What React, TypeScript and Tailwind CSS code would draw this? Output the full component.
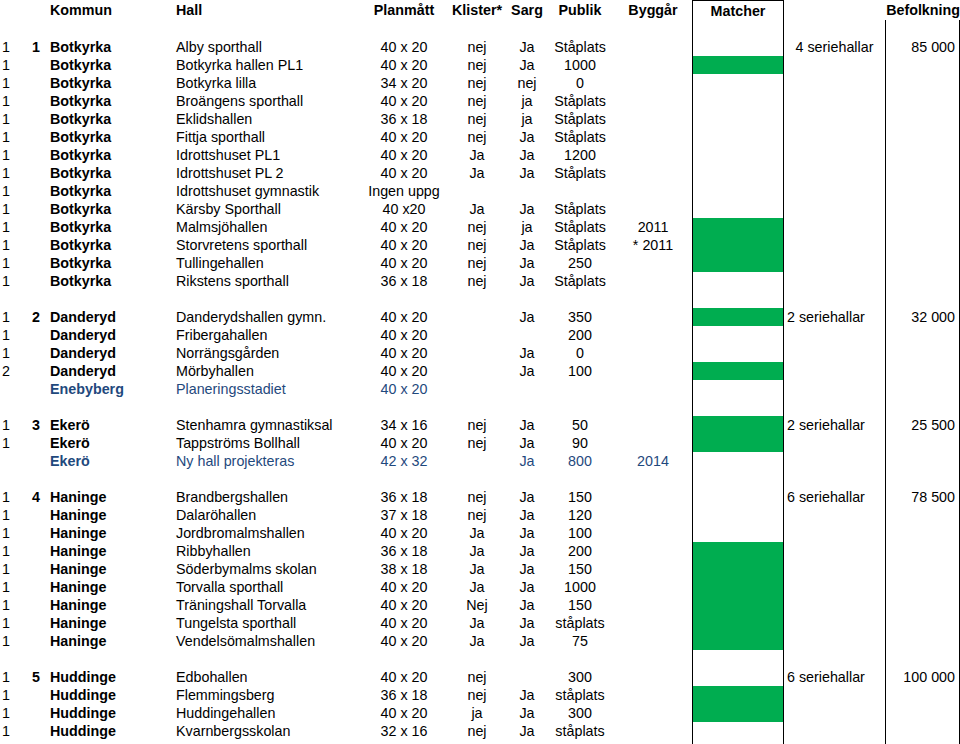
type Row = {
  a?: string;
  b?: string;
  kommun?: string;
  hall?: string;
  plan?: string;
  klister?: string;
  sarg?: string;
  publik?: string;
  bygg?: string;
  green?: boolean;
  serie?: string;
  serieLeft?: boolean;
  bef?: string;
  blue?: boolean;
};

const rows: Row[] = [
  { a: '1', b: '1', kommun: 'Botkyrka', hall: 'Alby sporthall', plan: '40 x 20', klister: 'nej', sarg: 'Ja', publik: 'Ståplats', serie: '4 seriehallar', bef: '85 000' },
  { a: '1', kommun: 'Botkyrka', hall: 'Botkyrka hallen PL1', plan: '40 x 20', klister: 'nej', sarg: 'Ja', publik: '1000', green: true },
  { a: '1', kommun: 'Botkyrka', hall: 'Botkyrka lilla', plan: '34 x 20', klister: 'nej', sarg: 'nej', publik: '0' },
  { a: '1', kommun: 'Botkyrka', hall: 'Broängens sporthall', plan: '40 x 20', klister: 'nej', sarg: 'ja', publik: 'Ståplats' },
  { a: '1', kommun: 'Botkyrka', hall: 'Eklidshallen', plan: '36 x 18', klister: 'nej', sarg: 'ja', publik: 'Ståplats' },
  { a: '1', kommun: 'Botkyrka', hall: 'Fittja sporthall', plan: '40 x 20', klister: 'nej', sarg: 'Ja', publik: 'Ståplats' },
  { a: '1', kommun: 'Botkyrka', hall: 'Idrottshuset PL1', plan: '40 x 20', klister: 'Ja', sarg: 'Ja', publik: '1200' },
  { a: '1', kommun: 'Botkyrka', hall: 'Idrottshuset PL 2', plan: '40 x 20', klister: 'Ja', sarg: 'Ja', publik: 'Ståplats' },
  { a: '1', kommun: 'Botkyrka', hall: 'Idrottshuset gymnastik', plan: 'Ingen uppg' },
  { a: '1', kommun: 'Botkyrka', hall: 'Kärsby Sporthall', plan: '40 x20', klister: 'Ja', sarg: 'Ja', publik: 'Ståplats' },
  { a: '1', kommun: 'Botkyrka', hall: 'Malmsjöhallen', plan: '40 x 20', klister: 'nej', sarg: 'ja', publik: 'Ståplats', bygg: '2011', green: true },
  { a: '1', kommun: 'Botkyrka', hall: 'Storvretens sporthall', plan: '40 x 20', klister: 'nej', sarg: 'Ja', publik: 'Ståplats', bygg: '* 2011', green: true },
  { a: '1', kommun: 'Botkyrka', hall: 'Tullingehallen', plan: '40 x 20', klister: 'nej', sarg: 'Ja', publik: '250', green: true },
  { a: '1', kommun: 'Botkyrka', hall: 'Rikstens sporthall', plan: '36 x 18', klister: 'nej', sarg: 'Ja', publik: 'Ståplats' },
  {},
  { a: '1', b: '2', kommun: 'Danderyd', hall: 'Danderydshallen gymn.', plan: '40 x 20', sarg: 'Ja', publik: '350', green: true, serie: '2 seriehallar', serieLeft: true, bef: '32 000' },
  { a: '1', kommun: 'Danderyd', hall: 'Fribergahallen', plan: '40 x 20', publik: '200' },
  { a: '1', kommun: 'Danderyd', hall: 'Norrängsgården', plan: '40 x 20', sarg: 'Ja', publik: '0' },
  { a: '2', kommun: 'Danderyd', hall: 'Mörbyhallen', plan: '40 x 20', sarg: 'Ja', publik: '100', green: true },
  { kommun: 'Enebyberg', hall: 'Planeringsstadiet', plan: '40 x 20', blue: true },
  {},
  { a: '1', b: '3', kommun: 'Ekerö', hall: 'Stenhamra gymnastiksal', plan: '34 x 16', klister: 'nej', sarg: 'Ja', publik: '50', green: true, serie: '2 seriehallar', serieLeft: true, bef: '25 500' },
  { a: '1', kommun: 'Ekerö', hall: 'Tappströms Bollhall', plan: '40 x 20', klister: 'nej', sarg: 'Ja', publik: '90', green: true },
  { kommun: 'Ekerö', hall: 'Ny hall projekteras', plan: '42 x 32', sarg: 'Ja', publik: '800', bygg: '2014', blue: true },
  {},
  { a: '1', b: '4', kommun: 'Haninge', hall: 'Brandbergshallen', plan: '36 x 18', klister: 'nej', sarg: 'Ja', publik: '150', serie: '6 seriehallar', serieLeft: true, bef: '78 500' },
  { a: '1', kommun: 'Haninge', hall: 'Dalaröhallen', plan: '37 x 18', klister: 'nej', sarg: 'Ja', publik: '120' },
  { a: '1', kommun: 'Haninge', hall: 'Jordbromalmshallen', plan: '40 x 20', klister: 'Ja', sarg: 'Ja', publik: '100' },
  { a: '1', kommun: 'Haninge', hall: 'Ribbyhallen', plan: '36 x 18', klister: 'Ja', sarg: 'Ja', publik: '200', green: true },
  { a: '1', kommun: 'Haninge', hall: 'Söderbymalms skolan', plan: '38 x 18', klister: 'Ja', sarg: 'Ja', publik: '150', green: true },
  { a: '1', kommun: 'Haninge', hall: 'Torvalla sporthall', plan: '40 x 20', klister: 'Ja', sarg: 'Ja', publik: '1000', green: true },
  { a: '1', kommun: 'Haninge', hall: 'Träningshall Torvalla', plan: '40 x 20', klister: 'Nej', sarg: 'Ja', publik: '150', green: true },
  { a: '1', kommun: 'Haninge', hall: 'Tungelsta sporthall', plan: '40 x 20', klister: 'Ja', sarg: 'Ja', publik: 'ståplats', green: true },
  { a: '1', kommun: 'Haninge', hall: 'Vendelsömalmshallen', plan: '40 x 20', klister: 'Ja', sarg: 'Ja', publik: '75', green: true },
  {},
  { a: '1', b: '5', kommun: 'Huddinge', hall: 'Edbohallen', plan: '40 x 20', klister: 'nej', publik: '300', serie: '6 seriehallar', serieLeft: true, bef: '100 000' },
  { a: '1', kommun: 'Huddinge', hall: 'Flemmingsberg', plan: '36 x 18', klister: 'nej', sarg: 'Ja', publik: 'ståplats', green: true },
  { a: '1', kommun: 'Huddinge', hall: 'Huddingehallen', plan: '40 x 20', klister: 'ja', sarg: 'Ja', publik: '300', green: true },
  { a: '1', kommun: 'Huddinge', hall: 'Kvarnbergsskolan', plan: '32 x 16', klister: 'nej', sarg: 'Ja', publik: 'ståplats' },
];

const cols =
  'grid grid-cols-[28px_16px_128px_190px_84px_62px_38px_68px_78px_92px_102px_74px]';

function DataRow({ r }: { r: Row }) {
  const tone = r.blue ? 'text-[#1f497d]' : 'text-black';
  return (
    <div className={`${cols} h-[18px] leading-[18px] ${tone}`}>
      <div className="pl-0.5">{r.a}</div>
      <div className="pr-1 text-right font-bold">{r.b}</div>
      <div className="pl-[6px] font-bold whitespace-nowrap">{r.kommun}</div>
      <div className="pl-1 whitespace-nowrap">{r.hall}</div>
      <div className="text-center whitespace-nowrap">{r.plan}</div>
      <div className="text-center">{r.klister}</div>
      <div className="text-center">{r.sarg}</div>
      <div className="text-center">{r.publik}</div>
      <div className="text-center">{r.bygg}</div>
      <div className="border-x border-black">
        {r.green && <div className="h-full bg-[#00ad50]" />}
      </div>
      <div
        className={`border-r border-black whitespace-nowrap ${
          r.serieLeft ? 'pl-[3px]' : 'text-center'
        }`}
      >
        {r.serie}
      </div>
      <div className="border-r border-black pr-1 text-right whitespace-nowrap">{r.bef}</div>
    </div>
  );
}

export default function App() {
  return (
    <div
      className="w-[960px] h-[744px] overflow-hidden bg-white text-[14.3px] text-black"
      style={{ fontFamily: '"Liberation Sans", Arial, sans-serif' }}
    >
      {/* Header */}
      <div className={`${cols} h-[20px] leading-[20px] font-bold`}>
        <div />
        <div />
        <div className="pl-[6px]">Kommun</div>
        <div className="pl-1">Hall</div>
        <div className="text-center">Planmått</div>
        <div className="text-center">Klister*</div>
        <div className="text-center">Sarg</div>
        <div className="text-center">Publik</div>
        <div className="text-center">Byggår</div>
        <div className="border-x border-t border-black text-center">Matcher</div>
        <div />
        <div className="text-right whitespace-nowrap">Befolkning</div>
      </div>

      {/* Spacer row */}
      <DataRow r={{}} />

      {rows.map((r, i) => (
        <DataRow key={i} r={r} />
      ))}

      {/* lines run to the bottom edge */}
      <div className={`${cols} h-[4px]`}>
        <div />
        <div />
        <div />
        <div />
        <div />
        <div />
        <div />
        <div />
        <div />
        <div className="border-x border-black" />
        <div className="border-r border-black" />
        <div className="border-r border-black" />
      </div>
    </div>
  );
}
